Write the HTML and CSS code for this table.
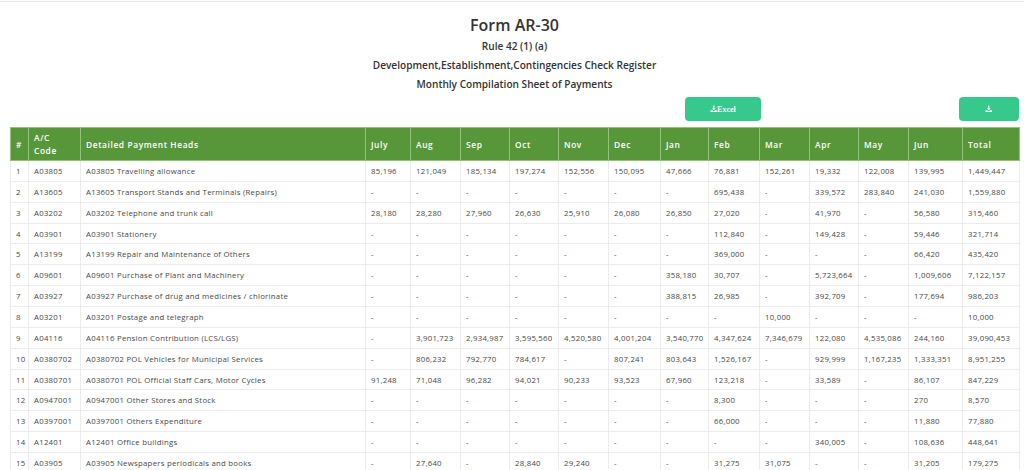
FILE: index.html
```html
<!DOCTYPE html>
<html lang="en">
<head>
<meta charset="utf-8">
<title>Form AR-30</title>
<link rel="stylesheet" href="styles.css">
</head>
<body>
<div class="page">
  <header class="heading">
    <h1 class="title">Form AR-30</h1>
    <p class="sub">Rule 42 (1) (a)</p>
    <p class="sub">Development,Establishment,Contingencies Check Register</p>
    <p class="sub">Monthly Compilation Sheet of Payments</p>
  </header>
  <div class="toolbar">
    <div></div>
    <div class="tb-mid"><button class="btn btn-excel"><svg class="ico" viewBox="0 0 16 16"><path d="M6.5 1h3v6h2.6L8 11.2 3.9 7h2.6z M1 11h4.2L8 13.6 10.8 11H15v4H1z"/></svg>Excel</button></div>
    <div class="tb-end"><button class="btn btn-dl"><svg class="ico" viewBox="0 0 16 16"><path d="M6.5 1h3v6h2.6L8 11.2 3.9 7h2.6z M1 11h4.2L8 13.6 10.8 11H15v4H1z"/></svg></button></div>
  </div>
  <table class="grid">
    <colgroup>
      <col class="c-no"><col class="c-code"><col class="c-head">
      <col class="c-jul"><col class="c-aug"><col class="c-sep"><col class="c-oct"><col class="c-nov"><col class="c-dec">
      <col class="c-jan"><col class="c-feb"><col class="c-mar"><col class="c-apr"><col class="c-may"><col class="c-jun"><col class="c-tot">
    </colgroup>
    <thead>
      <tr><th>#</th><th>A/C<br>Code</th><th>Detailed Payment Heads</th><th>July</th><th>Aug</th><th>Sep</th><th>Oct</th><th>Nov</th><th>Dec</th><th>Jan</th><th>Feb</th><th>Mar</th><th>Apr</th><th>May</th><th>Jun</th><th>Total</th></tr>
    </thead>
    <tbody>
      <tr><td>1</td><td>A03805</td><td>A03805 Travelling allowance</td><td>85,196</td><td>121,049</td><td>185,134</td><td>197,274</td><td>152,556</td><td>150,095</td><td>47,666</td><td>76,881</td><td>152,261</td><td>19,332</td><td>122,008</td><td>139,995</td><td>1,449,447</td></tr>
      <tr><td>2</td><td>A13605</td><td>A13605 Transport Stands and Terminals (Repairs)</td><td>-</td><td>-</td><td>-</td><td>-</td><td>-</td><td>-</td><td>-</td><td>695,438</td><td>-</td><td>339,572</td><td>283,840</td><td>241,030</td><td>1,559,880</td></tr>
      <tr><td>3</td><td>A03202</td><td>A03202 Telephone and trunk call</td><td>28,180</td><td>28,280</td><td>27,960</td><td>26,630</td><td>25,910</td><td>26,080</td><td>26,850</td><td>27,020</td><td>-</td><td>41,970</td><td>-</td><td>56,580</td><td>315,460</td></tr>
      <tr><td>4</td><td>A03901</td><td>A03901 Stationery</td><td>-</td><td>-</td><td>-</td><td>-</td><td>-</td><td>-</td><td>-</td><td>112,840</td><td>-</td><td>149,428</td><td>-</td><td>59,446</td><td>321,714</td></tr>
      <tr><td>5</td><td>A13199</td><td>A13199 Repair and Maintenance of Others</td><td>-</td><td>-</td><td>-</td><td>-</td><td>-</td><td>-</td><td>-</td><td>369,000</td><td>-</td><td>-</td><td>-</td><td>66,420</td><td>435,420</td></tr>
      <tr><td>6</td><td>A09601</td><td>A09601 Purchase of Plant and Machinery</td><td>-</td><td>-</td><td>-</td><td>-</td><td>-</td><td>-</td><td>358,180</td><td>30,707</td><td>-</td><td>5,723,664</td><td>-</td><td>1,009,606</td><td>7,122,157</td></tr>
      <tr><td>7</td><td>A03927</td><td>A03927 Purchase of drug and medicines / chlorinate</td><td>-</td><td>-</td><td>-</td><td>-</td><td>-</td><td>-</td><td>388,815</td><td>26,985</td><td>-</td><td>392,709</td><td>-</td><td>177,694</td><td>986,203</td></tr>
      <tr><td>8</td><td>A03201</td><td>A03201 Postage and telegraph</td><td>-</td><td>-</td><td>-</td><td>-</td><td>-</td><td>-</td><td>-</td><td>-</td><td>10,000</td><td>-</td><td>-</td><td>-</td><td>10,000</td></tr>
      <tr><td>9</td><td>A04116</td><td>A04116 Pension Contribution (LCS/LGS)</td><td>-</td><td>3,901,723</td><td>2,934,987</td><td>3,595,560</td><td>4,520,580</td><td>4,001,204</td><td>3,540,770</td><td>4,347,624</td><td>7,346,679</td><td>122,080</td><td>4,535,086</td><td>244,160</td><td>39,090,453</td></tr>
      <tr><td>10</td><td>A0380702</td><td>A0380702 POL Vehicles for Municipal Services</td><td>-</td><td>806,232</td><td>792,770</td><td>784,617</td><td>-</td><td>807,241</td><td>803,643</td><td>1,526,167</td><td>-</td><td>929,999</td><td>1,167,235</td><td>1,333,351</td><td>8,951,255</td></tr>
      <tr><td>11</td><td>A0380701</td><td>A0380701 POL Official Staff Cars, Motor Cycles</td><td>91,248</td><td>71,048</td><td>96,282</td><td>94,021</td><td>90,233</td><td>93,523</td><td>67,960</td><td>123,218</td><td>-</td><td>33,589</td><td>-</td><td>86,107</td><td>847,229</td></tr>
      <tr><td>12</td><td>A0947001</td><td>A0947001 Other Stores and Stock</td><td>-</td><td>-</td><td>-</td><td>-</td><td>-</td><td>-</td><td>-</td><td>8,300</td><td>-</td><td>-</td><td>-</td><td>270</td><td>8,570</td></tr>
      <tr><td>13</td><td>A0397001</td><td>A0397001 Others Expenditure</td><td>-</td><td>-</td><td>-</td><td>-</td><td>-</td><td>-</td><td>-</td><td>66,000</td><td>-</td><td>-</td><td>-</td><td>11,880</td><td>77,880</td></tr>
      <tr><td>14</td><td>A12401</td><td>A12401 Office buildings</td><td>-</td><td>-</td><td>-</td><td>-</td><td>-</td><td>-</td><td>-</td><td>-</td><td>-</td><td>340,005</td><td>-</td><td>108,636</td><td>448,641</td></tr>
      <tr><td>15</td><td>A03905</td><td>A03905 Newspapers periodicals and books</td><td>-</td><td>27,640</td><td>-</td><td>28,840</td><td>29,240</td><td>-</td><td>-</td><td>31,275</td><td>31,075</td><td>-</td><td>-</td><td>31,205</td><td>179,275</td></tr>
    </tbody>
  </table>
</div>
</body>
</html>
```
FILE: styles.css
```css
html, body {
  margin: 0;
  padding: 0;
  background: #ffffff;
}
body {
  font-family: "Open Sans", "Noto Sans", sans-serif;
  color: #444;
}
.page {
  margin-top: 1px;
  border-top: 1px solid #e9e9e9;
  padding: 0 5px 0 10px;
}
.heading {
  text-align: center;
  color: #333;
}
.title {
  margin: 11px 0 0;
  font-size: 16px;
  line-height: 24px;
  font-weight: 600;
}
.sub {
  margin: 0;
  font-size: 10.1px;
  line-height: 19px;
  font-weight: 600;
}
.toolbar {
  display: grid;
  grid-template-columns: 8fr 2fr 2fr;
  margin-top: 3px;
}
.tb-mid {
  padding-left: 2px;
}
.tb-end {
  display: flex;
  justify-content: flex-end;
}
.btn {
  display: flex;
  align-items: center;
  justify-content: center;
  height: 24px;
  border: 0;
  border-radius: 4px;
  background: #36c98b;
  color: #fff;
  font-family: "Liberation Serif", serif;
  font-weight: 700;
  font-size: 8px;
  padding: 0;
}
.btn-excel { width: 76px; }
.btn-dl { width: 60px; }
.ico {
  width: 7.5px;
  height: 7.5px;
  fill: #fff;
}
.grid {
  margin-top: 6px;
  width: 1009px;
  border-collapse: collapse;
  table-layout: fixed;
  font-size: 7.8px;
  letter-spacing: 0.25px;
}
.c-no { width: 18px; }
.c-code { width: 52px; }
.c-head { width: 285px; }
.c-jul { width: 45px; }
.c-aug { width: 50px; }
.c-sep { width: 49px; }
.c-oct { width: 49px; }
.c-nov { width: 50px; }
.c-dec { width: 52px; }
.c-jan { width: 48px; }
.c-feb { width: 51px; }
.c-mar { width: 50px; }
.c-apr { width: 49px; }
.c-may { width: 50px; }
.c-jun { width: 54px; }
.c-tot { width: 57px; }
.grid th {
  background: #57973a;
  color: #fff;
  font-weight: 600;
  font-size: 8.4px;
  letter-spacing: 0.6px;
  line-height: 13px;
  text-align: left;
  padding: 3px 5px;
  height: 26px;
  border: 1px solid #93c27a;
  white-space: nowrap;
}
.grid td {
  height: 19.86px;
  padding: 0 5px;
  border: 1px solid #ececec;
  white-space: nowrap;
  overflow: hidden;
  color: #484848;
}
```
